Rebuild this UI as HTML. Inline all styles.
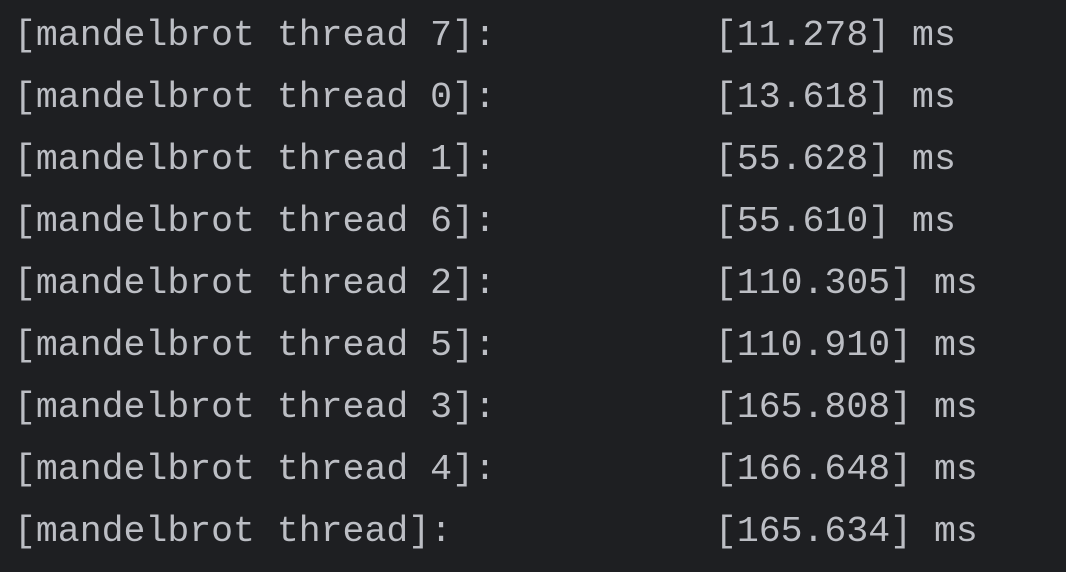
<!DOCTYPE html>
<html><head><meta charset="utf-8"><style>
html,body{margin:0;padding:0;background:#1e1f22;width:1066px;height:572px;overflow:hidden}
pre{margin:0;padding:5px 0 0 14px;font-family:"Liberation Mono","DejaVu Sans Mono",monospace;font-size:36.5px;line-height:62px;color:#bcbec4}
</style></head><body><pre>[mandelbrot thread 7]:          [11.278] ms
[mandelbrot thread 0]:          [13.618] ms
[mandelbrot thread 1]:          [55.628] ms
[mandelbrot thread 6]:          [55.610] ms
[mandelbrot thread 2]:          [110.305] ms
[mandelbrot thread 5]:          [110.910] ms
[mandelbrot thread 3]:          [165.808] ms
[mandelbrot thread 4]:          [166.648] ms
[mandelbrot thread]:            [165.634] ms</pre></body></html>
